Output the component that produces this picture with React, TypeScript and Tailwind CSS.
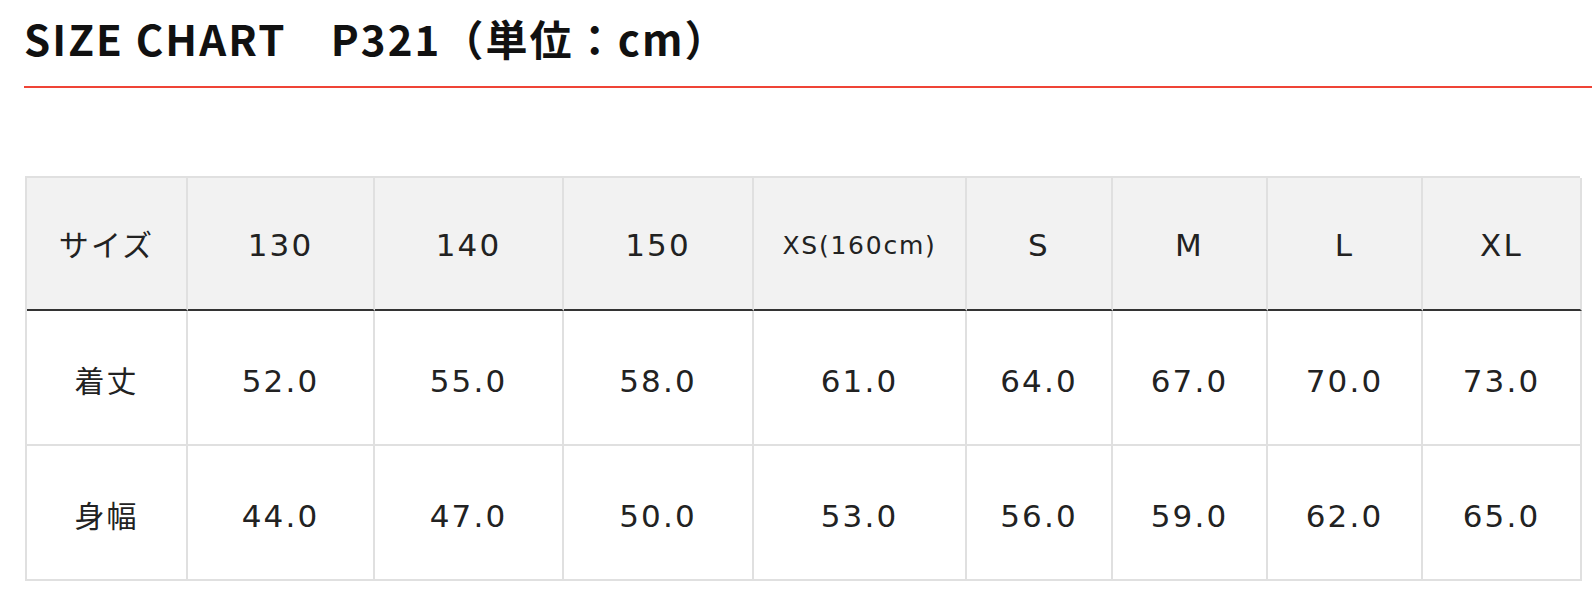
import React from 'react';

const sizes = ['130', '140', '150', 'XS(160cm)', 'S', 'M', 'L', 'XL'];

const rows = [
  { label: '着丈', values: ['52.0', '55.0', '58.0', '61.0', '64.0', '67.0', '70.0', '73.0'] },
  { label: '身幅', values: ['44.0', '47.0', '50.0', '53.0', '56.0', '59.0', '62.0', '65.0'] },
];

const cell =
  'flex items-center justify-center border-r-2 border-[#e0e0e0] text-[#222] tracking-[0.07em]';

export default function App() {
  return (
    <div className="w-[1592px] h-[610px] bg-white overflow-hidden">
      {/* Heading */}
      <div className="ml-[24px] pt-[17px] pb-[27px] border-b-2 border-[#ef4436]">
        <h1
          className="text-[42px] leading-none font-bold text-[#111] tracking-[0.05em]"
          style={{ fontFamily: '"Noto Sans CJK JP", "Noto Sans", sans-serif' }}
        >
          SIZE CHART　P321（単位：cm）
        </h1>
      </div>

      {/* Table */}
      <div
        className="mt-[88px] ml-[25px] w-[1555px] border-t-2 border-l-2 border-[#e0e0e0] grid grid-cols-[161px_187px_189px_190px_213px_146px_155px_155px_159px]"
        style={{ fontFamily: '"DejaVu Sans", "Noto Sans CJK JP", sans-serif' }}
      >
        <div className={`${cell} h-[133px] pt-1 bg-[#f2f2f2] border-b-2 border-b-[#333] text-[30px]`}>
          サイズ
        </div>
        {sizes.map((s) => (
          <div
            key={s}
            className={`${cell} h-[133px] pt-1 bg-[#f2f2f2] border-b-2 border-b-[#333] ${
              s.length > 4 ? 'text-[25px]' : 'text-[31px]'
            }`}
          >
            {s}
          </div>
        ))}

        {rows.map((r) => (
          <React.Fragment key={r.label}>
            <div className={`${cell} h-[135px] pt-2 border-b-2 border-b-[#e0e0e0] text-[30px]`}>{r.label}</div>
            {r.values.map((v, i) => (
              <div key={i} className={`${cell} h-[135px] pt-2 border-b-2 border-b-[#e0e0e0] text-[31px]`}>
                {v}
              </div>
            ))}
          </React.Fragment>
        ))}
      </div>
    </div>
  );
}
